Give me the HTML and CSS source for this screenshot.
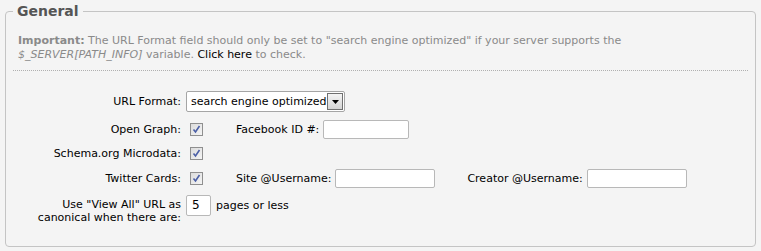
FILE: index.html
```html
<!DOCTYPE html>
<html lang="en">
<head>
    <meta charset="UTF-8">
    <title>General settings</title>
    <link rel="stylesheet" href="styles.css">
</head>
<body>

<fieldset class="box">
    <legend>General</legend>
    <p class="note"><b>Important:</b> The URL Format field should only be set to "search engine optimized" if your server supports the<br><i>$_SERVER[PATH_INFO]</i> variable. <a href="#">Click here</a> to check.</p>
    <hr class="sep">

    <div class="form">
        <label class="lbl">URL Format:</label>
        <div class="ctl">
            <div class="select">
                <span class="select-val">search engine optimized</span>
                <span class="select-btn"><svg width="7" height="4" viewBox="0 0 7 4"><path d="M0 0h7L3.5 4z" fill="#000"/></svg></span>
            </div>
        </div>

        <label class="lbl">Open Graph:</label>
        <div class="ctl">
            <span class="check"><svg width="9" height="9" viewBox="0 0 9 9"><path d="M1.5 4.5l2 2.5L7.5 1" fill="none" stroke="#4b5fa6" stroke-width="1.6"/></svg></span>
            <span class="sub">Facebook ID #:</span>
            <span class="field fb"></span>
        </div>

        <label class="lbl">Schema.org Microdata:</label>
        <div class="ctl ctl-short">
            <span class="check"><svg width="9" height="9" viewBox="0 0 9 9"><path d="M1.5 4.5l2 2.5L7.5 1" fill="none" stroke="#4b5fa6" stroke-width="1.6"/></svg></span>
        </div>

        <label class="lbl">Twitter Cards:</label>
        <div class="ctl">
            <span class="check"><svg width="9" height="9" viewBox="0 0 9 9"><path d="M1.5 4.5l2 2.5L7.5 1" fill="none" stroke="#4b5fa6" stroke-width="1.6"/></svg></span>
            <span class="sub">Site @Username:</span>
            <span class="field user"></span>
            <span class="sub">Creator @Username:</span>
            <span class="field user"></span>
        </div>

        <label class="lbl lbl-top">Use "View All" URL as<br>canonical when there are:</label>
        <div class="ctl ctl-top">
            <span class="field num">5</span>
            <span>pages or less</span>
        </div>
    </div>
</fieldset>

</body>
</html>
```

FILE: styles.css
```css
body {
    font-family: "DejaVu Sans", sans-serif;
    font-size: 11px;
    background-color: #f4f4f4;
    color: #000;
    margin: 0;
    padding: 3px 5px 0 5px;
}
.box {
    border: 1px solid #c4c4c4;
    border-radius: 4px;
    margin: 0;
    padding: 15px 12px 0 12px;
    height: 244px;
    box-sizing: border-box;
}
legend {
    font-size: 14px;
    font-weight: bold;
    color: #555;
    padding: 0 4px;
    margin-left: -5px;
}
.note {
    color: #8a8a8a;
    line-height: 14px;
    margin: 0;
    white-space: nowrap;
}
.note b {
    color: #8a8a8a;
}
.note a {
    color: #000;
    text-decoration: none;
}
.sep {
    border: none;
    border-top: 1px dotted #b0b0b0;
    margin: 8px -5px 0 -5px;
}
.form {
    display: grid;
    grid-template-columns: 163px 1fr;
    column-gap: 5px;
    row-gap: 7px;
    margin-top: 20px;
}
.lbl {
    text-align: right;
    align-self: center;
}
.lbl-top {
    align-self: start;
    line-height: 13px;
    margin-top: 3px;
}
.ctl {
    display: flex;
    align-items: center;
    min-height: 20px;
}
.ctl-short {
    min-height: 15px;
}
.ctl-top {
    align-self: start;
}
.select {
    display: flex;
    align-items: center;
    height: 21px;
    width: 159px;
    background: #fff;
    border: 1px solid #a5a5a5;
    border-radius: 2px;
    box-sizing: border-box;
}
.select-val {
    flex: 1;
    min-width: 0;
    padding-left: 4px;
    font-size: 11px;
    white-space: nowrap;
}
.select-btn {
    display: flex;
    flex-shrink: 0;
    align-items: center;
    justify-content: center;
    width: 16px;
    height: 17px;
    margin-right: 1px;
    background: linear-gradient(#f4f4f4, #d4d4d4);
    border: 1px solid #707070;
    box-sizing: border-box;
}
.check {
    display: flex;
    align-items: center;
    justify-content: center;
    width: 13px;
    height: 13px;
    margin-left: 4px;
    border: 1px solid #8f8f8f;
    background: linear-gradient(135deg, #dcdcdc, #f4f4f4);
    box-sizing: border-box;
}
.sub {
    margin-left: 33px;
    margin-right: 4px;
}
.field {
    display: inline-block;
    height: 19px;
    background: #fff;
    border: 1px solid #b8b8b8;
    border-radius: 2px;
    box-sizing: border-box;
}
.fb {
    width: 86px;
}
.user {
    width: 100px;
}
.user + .sub {
    margin-left: 32px;
}
.num {
    width: 25px;
    height: 21px;
    font-size: 12px;
    line-height: 19px;
    padding-left: 5px;
    margin-right: 5px;
}
```
